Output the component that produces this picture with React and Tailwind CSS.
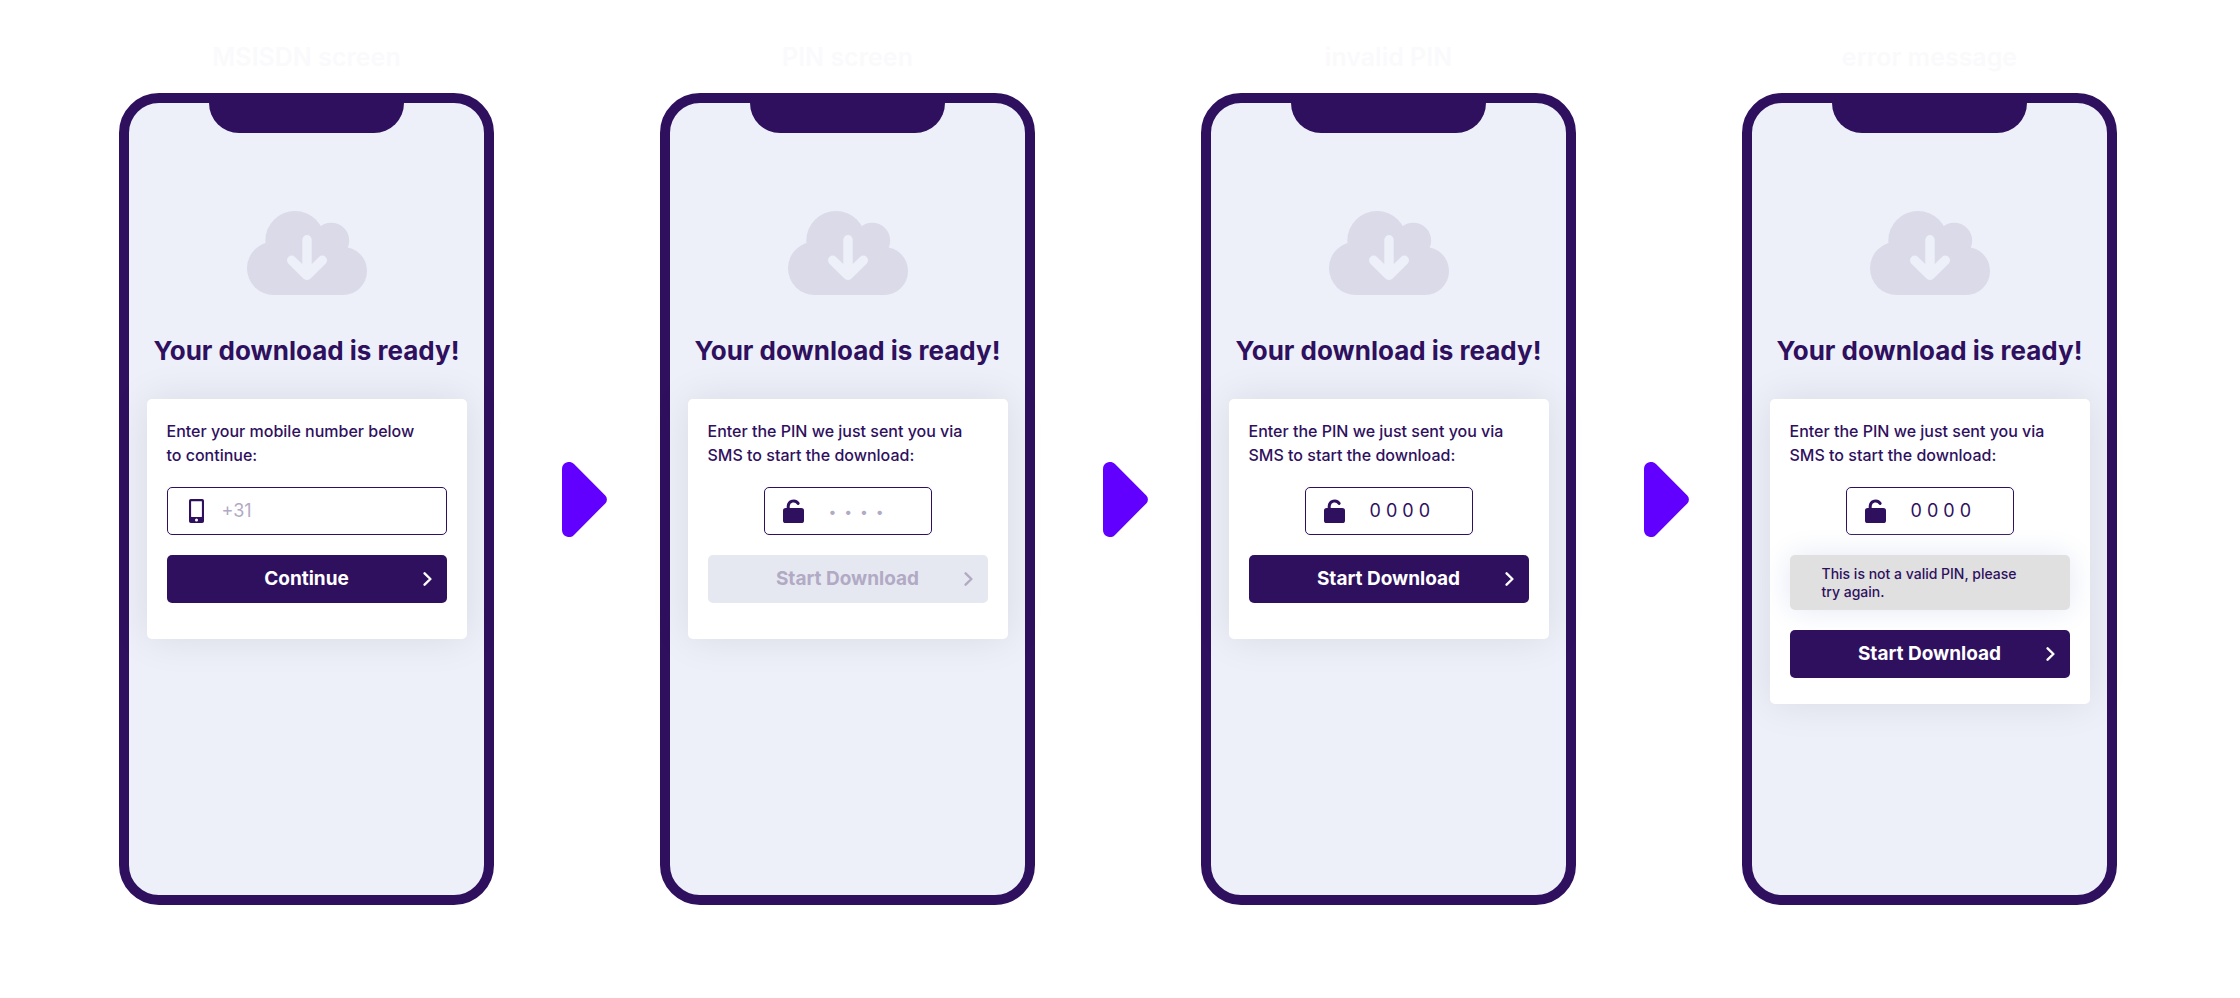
import React, { Fragment, useState } from "react";

const screens = [
  {
    id: "msisdn",
    label: "MSISDN screen",
    text: "Enter your mobile number below to continue:",
    type: "phone",
    placeholder: "+31",
    button: "Continue",
  },
  {
    id: "pin",
    label: "PIN screen",
    text: "Enter the PIN we just sent you via SMS to start the download:",
    type: "pin",
    placeholder: "•  •  •  •",
    button: "Start Download",
    disabled: true,
  },
  {
    id: "invalid",
    label: "invalid PIN",
    text: "Enter the PIN we just sent you via SMS to start the download:",
    type: "pin",
    value: "0 0 0 0",
    button: "Start Download",
  },
  {
    id: "error",
    label: "error message",
    text: "Enter the PIN we just sent you via SMS to start the download:",
    type: "pin",
    value: "0 0 0 0",
    error: "This is not a valid PIN, please try again.",
    button: "Start Download",
  },
];

const CloudIcon = () => (
  <svg width="120" height="84" viewBox="0 0 120 84" aria-hidden="true">
    <g fill="#dbdae8">
      <circle cx="48" cy="29.7" r="29.7" />
      <circle cx="84.2" cy="29.7" r="18" />
      <circle cx="26.7" cy="57.3" r="26.7" />
      <circle cx="96" cy="60" r="24" />
      <path d="M27 40h69v44H27z" />
    </g>
    <path
      d="M60 28.7v35.6M44.7 49.3 60 64.4l15.3-15.1"
      fill="none"
      stroke="#edf0f8"
      strokeWidth="9.4"
      strokeLinecap="round"
      strokeLinejoin="round"
    />
  </svg>
);

const MobileIcon = () => (
  <svg width="15" height="24" viewBox="0 0 15 24" role="img" aria-label="Mobile number">
    <path
      fill="#2f105e"
      fillRule="evenodd"
      d="M1.8 0h11.4A1.8 1.8 0 0 1 15 1.8v20.4a1.8 1.8 0 0 1-1.8 1.8H1.8A1.8 1.8 0 0 1 0 22.2V1.8A1.8 1.8 0 0 1 1.8 0zM2.5 2.2a.4.4 0 0 0-.4.4v15a.4.4 0 0 0 .4.4h10a.4.4 0 0 0 .4-.4v-15a.4.4 0 0 0-.4-.4zM7.5 19.4a1.5 1.5 0 1 0 0 3 1.5 1.5 0 0 0 0-3z"
    />
  </svg>
);

const UnlockIcon = () => (
  <svg width="21" height="24" viewBox="0 0 21 24" role="img" aria-label="PIN">
    <rect y="9" width="21" height="15" rx="2.6" fill="#2f105e" />
    <path
      d="M5.2 11V7a5.4 5.4 0 0 1 9.9-2.6"
      fill="none"
      stroke="#2f105e"
      strokeWidth="3"
      strokeLinecap="round"
    />
  </svg>
);

const Chevron = () => (
  <svg width="9" height="14" viewBox="0 0 9 14" aria-hidden="true">
    <path
      d="M1.6 1.3 7.4 7l-5.8 5.7"
      fill="none"
      stroke="currentColor"
      strokeWidth="2.4"
      strokeLinecap="round"
      strokeLinejoin="round"
    />
  </svg>
);

const Arrow = () => (
  <div className="w-[166px] h-[812px] pl-[68px] flex items-center">
    <svg width="45" height="75" viewBox="0 0 45 75" aria-hidden="true">
      <path
        fill="#6200ff"
        d="M0 7a7 7 0 0 1 12-4.9L43.3 33.6a5.5 5.5 0 0 1 0 7.8L12 72.9A7 7 0 0 1 0 68z"
      />
    </svg>
  </div>
);

const Field = ({ screen }) => {
  const [value, setValue] = useState(screen.value || "");
  const isPhone = screen.type === "phone";

  return (
    <div
      className={
        isPhone
          ? "flex items-center h-12 border border-[#2f105e] rounded-[5px]"
          : "flex items-center h-12 w-[168px] mx-auto border border-[#2f105e] rounded-[5px]"
      }
    >
      <label
        htmlFor={screen.id}
        className={
          isPhone ? "w-[54px] pl-[21px] shrink-0" : "w-16 pl-[18px] shrink-0"
        }
      >
        {isPhone ? <MobileIcon /> : <UnlockIcon />}
      </label>
      <input
        id={screen.id}
        type={isPhone ? "tel" : "text"}
        placeholder={screen.placeholder}
        value={value}
        onChange={(e) => setValue(e.target.value)}
        className={
          isPhone
            ? "w-full min-w-0 text-lg leading-6 outline-none placeholder:text-[#b2aac5]"
            : "w-full min-w-0 text-lg leading-6 outline-none placeholder:text-sm placeholder:leading-6 placeholder:text-[#b2aac5]"
        }
      />
    </div>
  );
};

const Phone = ({ screen }) => (
  <section className="w-[375px]">
    <h2 className="mb-[18px] text-center text-[25px] leading-9 font-semibold text-[#fafafc]">
      {screen.label}
    </h2>
    <div className="min-h-[812px] flex flex-col items-center border-10 border-[#2f105e] rounded-[40px] bg-[#edf0f8]">
      <div className="w-[195px] h-[30px] rounded-b-[30px] bg-[#2f105e]" />
      <div className="mt-[78px]">
        <CloudIcon />
      </div>
      <h1 className="mt-[38px] text-[26px] leading-9 font-bold whitespace-nowrap">
        Your download is ready!
      </h1>
      <form
        onSubmit={(e) => e.preventDefault()}
        className={
          screen.error
            ? "w-80 mt-[30px] p-5 pb-[26px] flex flex-col gap-5 rounded-[5px] bg-white shadow-[0_0_40px_rgba(0,0,0,0.09)]"
            : "w-80 mt-[30px] p-5 pb-9 flex flex-col gap-5 rounded-[5px] bg-white shadow-[0_0_40px_rgba(0,0,0,0.09)]"
        }
      >
        <p className="pr-4 text-base leading-6 font-medium">{screen.text}</p>
        <Field screen={screen} />
        {screen.error && (
          <p
            role="alert"
            className="h-[55px] px-8 flex items-center rounded-[5px] bg-[#e0e0e0] text-sm leading-[18px] font-medium shadow-[0_0_30px_#e4e8f4]"
          >
            {screen.error}
          </p>
        )}
        <button
          type="submit"
          disabled={screen.disabled}
          className="h-12 px-[15px] grid grid-cols-[1fr_auto_1fr] items-center rounded-[5px] bg-[#2f105e] text-[19px] font-bold text-white disabled:bg-[#e5e8f1] disabled:text-[#b2aac5]"
        >
          <span className="col-start-2">{screen.button}</span>
          <span className="justify-self-end">
            <Chevron />
          </span>
        </button>
      </form>
    </div>
  </section>
);

function App() {
  return (
    <main className="flex flex-wrap justify-center items-end pt-[39px] pb-[93px] pr-1 bg-white font-['Inter',sans-serif] text-[#2f105e]">
      {screens.map((screen, i) => (
        <Fragment key={screen.id}>
          {i > 0 && <Arrow />}
          <Phone screen={screen} />
        </Fragment>
      ))}
    </main>
  );
}

export default App;
